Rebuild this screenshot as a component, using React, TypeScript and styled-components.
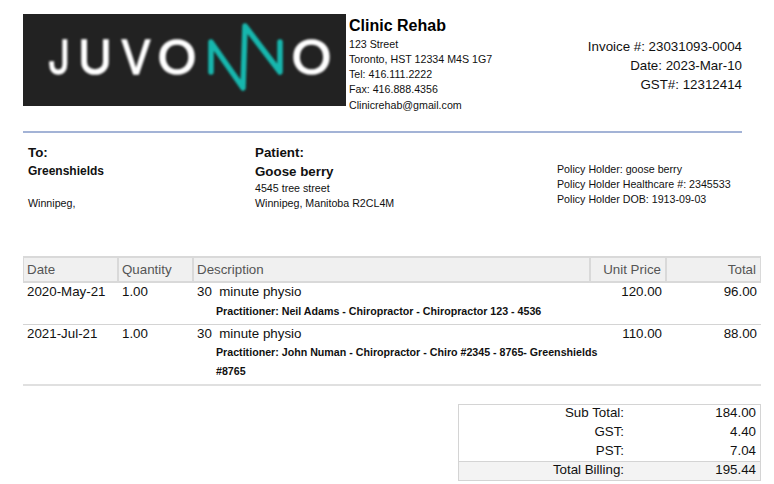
import React from 'react'
import styled, { createGlobalStyle } from 'styled-components'

const GlobalStyle = createGlobalStyle`
  html, body {
    margin: 0;
    padding: 0;
    background: #fff;
    color: #111;
    font-family: "Liberation Sans", Arial, sans-serif;
  }
`

const Page = styled.div`
  width: 774px;
  height: 484px;
  box-sizing: border-box;
  padding: 14px 13px 0 23px;
  overflow: hidden;
`

const Header = styled.header`
  display: flex;
  width: 719px;
  height: 117px;
  border-bottom: 2px solid #a3b3d6;
`

const Logo = styled.svg`
  display: block;
  flex-shrink: 0;
  width: 323px;
  height: 92px;
`

const Clinic = styled.div`
  margin-left: 3px;
  margin-top: 2px;
  width: 200px;
`

const ClinicName = styled.div`
  font-size: 16px;
  font-weight: 700;
  line-height: 20px;
  color: #000;
  margin-bottom: 0.7px;
`

const ClinicLine = styled.div`
  font-size: 10.67px;
  line-height: 15.2px;
`

const InvoiceMeta = styled.div`
  flex: 1;
  margin-top: 23px;
  text-align: right;
  font-size: 13.33px;
  line-height: 19px;
`

const Parties = styled.section`
  display: flex;
  width: 719px;
  height: 123px;
  box-sizing: border-box;
  padding: 12px 0 0 5px;
`

const Party = styled.div<{ $width: number }>`
  width: ${({ $width }) => $width}px;
  flex-shrink: 0;
`

const PartyLabel = styled.div`
  font-size: 13.33px;
  font-weight: 700;
  line-height: 15px;
  margin-bottom: 4px;
`

const PartyName = styled.div<{ $large?: boolean }>`
  font-size: ${({ $large }) => ($large ? '13.33px' : '12px')};
  font-weight: 700;
  line-height: ${({ $large }) => ($large ? '16px' : '15px')};
  margin-bottom: ${({ $large }) => ($large ? '1px' : '0')};
`

const PartyLine = styled.div<{ $gap?: number }>`
  font-size: 10.67px;
  line-height: 15px;
  margin-top: ${({ $gap }) => $gap ?? 0}px;
`

const Policy = styled.div`
  margin-top: 17px;
  font-size: 10.67px;
  line-height: 15px;
`

const Table = styled.table`
  width: 738px;
  border-collapse: separate;
  border-spacing: 0;
  table-layout: fixed;
`

const HeadCell = styled.th<{ $width: number; $right?: boolean }>`
  width: ${({ $width }) => $width}px;
  height: 27px;
  padding: 0 4px 0 3px;
  box-sizing: border-box;
  background: #f0f0f0;
  border: 1px solid #d9d9d9;
  border-width: 2px 1px 2px 1px;
  color: #555;
  font-size: 13.33px;
  font-weight: 400;
  text-align: ${({ $right }) => ($right ? 'right' : 'left')};
`

const Cell = styled.td<{ $right?: boolean; $last?: boolean }>`
  padding: 0 4px 3px 4px;
  vertical-align: top;
  font-size: 13.33px;
  line-height: 17px;
  border-bottom: ${({ $last }) => ($last ? '2px solid #e0e0e0' : '1px solid #d4d4d4')};
  text-align: ${({ $right }) => ($right ? 'right' : 'left')};
`

const Practitioner = styled.div`
  margin: 2px -14px 0 19px;
  font-size: 10.67px;
  font-weight: 700;
  line-height: 19px;

  tr:last-child & {
    margin-top: 1px;
  }
`

const SummaryWrap = styled.div`
  display: flex;
  justify-content: flex-end;
  width: 738px;
  margin-top: 18px;
`

const Summary = styled.div`
  width: 303px;
  box-sizing: border-box;
  border: 1px solid #d4d4d4;
`

const SummaryRow = styled.div<{ $total?: boolean }>`
  display: grid;
  grid-template-columns: 165px 1fr;
  height: 18.75px;
  box-sizing: border-box;
  padding-right: 4px;
  font-size: 13.33px;
  line-height: 16.5px;
  text-align: right;
  background: ${({ $total }) => ($total ? '#f3f3f3' : 'transparent')};
  border-top: ${({ $total }) => ($total ? '1px solid #d4d4d4' : 'none')};
`

const items = [
  {
    date: '2020-May-21',
    practitioner: 'Practitioner: Neil Adams - Chiropractor - Chiropractor 123 - 4536',
    price: '120.00',
    total: '96.00',
  },
  {
    date: '2021-Jul-21',
    practitioner: 'Practitioner: John Numan - Chiropractor - Chiro #2345 - 8765- Greenshields #8765',
    price: '110.00',
    total: '88.00',
  },
]

const summary = [
  { label: 'Sub Total:', value: '184.00' },
  { label: 'GST:', value: '4.40' },
  { label: 'PST:', value: '7.04' },
  { label: 'Total Billing:', value: '195.44', total: true },
]

const logoLetters = [
  { letter: 'J', x: 25, width: 22 },
  { letter: 'U', x: 55, width: 34 },
  { letter: 'V', x: 98, width: 30 },
  { letter: 'O', x: 134, width: 40 },
  { letter: 'O', x: 268, width: 41 },
]

const App: React.FC = () => (
  <Page>
    <GlobalStyle />
    <Header>
      <Logo viewBox="0 0 323 92">
        <defs>
          <filter id="soft">
            <feGaussianBlur stdDeviation="0.8" />
          </filter>
        </defs>
        <rect width="323" height="92" fill="#222" />
        <g
          filter="url(#soft)"
          fill="#fff"
          stroke="#fff"
          strokeWidth="1.5"
          fontFamily="Inter, sans-serif"
          fontSize="47"
        >
          {logoLetters.map((item) => (
            <text key={item.x} x={item.x} y="60" textLength={item.width} lengthAdjust="spacingAndGlyphs">
              {item.letter}
            </text>
          ))}
        </g>
        <path
          d="M188 58V28L220 74L222 12L257 58V28"
          filter="url(#soft)"
          fill="none"
          stroke="#14b7ae"
          strokeWidth="5.5"
          strokeLinejoin="round"
          strokeLinecap="round"
        />
      </Logo>
      <Clinic>
        <ClinicName>Clinic Rehab</ClinicName>
        <ClinicLine>123 Street</ClinicLine>
        <ClinicLine>Toronto, HST 12334 M4S 1G7</ClinicLine>
        <ClinicLine>Tel: 416.111.2222</ClinicLine>
        <ClinicLine>Fax: 416.888.4356</ClinicLine>
        <ClinicLine>Clinicrehab@gmail.com</ClinicLine>
      </Clinic>
      <InvoiceMeta>
        <div>Invoice #: 23031093-0004</div>
        <div>Date: 2023-Mar-10</div>
        <div>GST#: 12312414</div>
      </InvoiceMeta>
    </Header>
    <Parties>
      <Party $width={227}>
        <PartyLabel>To:</PartyLabel>
        <PartyName>Greenshields</PartyName>
        <PartyLine $gap={17}>Winnipeg,</PartyLine>
      </Party>
      <Party $width={302}>
        <PartyLabel>Patient:</PartyLabel>
        <PartyName $large>Goose berry</PartyName>
        <PartyLine>4545 tree street</PartyLine>
        <PartyLine>Winnipeg, Manitoba R2CL4M</PartyLine>
      </Party>
      <Policy>
        <div>Policy Holder: goose berry</div>
        <div>Policy Holder Healthcare #: 2345533</div>
        <div>Policy Holder DOB: 1913-09-03</div>
      </Policy>
    </Parties>
    <Table>
      <thead>
        <tr>
          <HeadCell $width={95}>Date</HeadCell>
          <HeadCell $width={75}>Quantity</HeadCell>
          <HeadCell $width={397}>Description</HeadCell>
          <HeadCell $width={76} $right>Unit Price</HeadCell>
          <HeadCell $width={95} $right>Total</HeadCell>
        </tr>
      </thead>
      <tbody>
        {items.map((item, index) => {
          const last = index === items.length - 1
          return (
            <tr key={item.date}>
              <Cell $last={last}>{item.date}</Cell>
              <Cell $last={last}>1.00</Cell>
              <Cell $last={last}>
                30&nbsp; minute physio
                <Practitioner>{item.practitioner}</Practitioner>
              </Cell>
              <Cell $last={last} $right>{item.price}</Cell>
              <Cell $last={last} $right>{item.total}</Cell>
            </tr>
          )
        })}
      </tbody>
    </Table>
    <SummaryWrap>
      <Summary>
        {summary.map((row) => (
          <SummaryRow key={row.label} $total={row.total}>
            <span>{row.label}</span>
            <span>{row.value}</span>
          </SummaryRow>
        ))}
      </Summary>
    </SummaryWrap>
  </Page>
)

export default App
